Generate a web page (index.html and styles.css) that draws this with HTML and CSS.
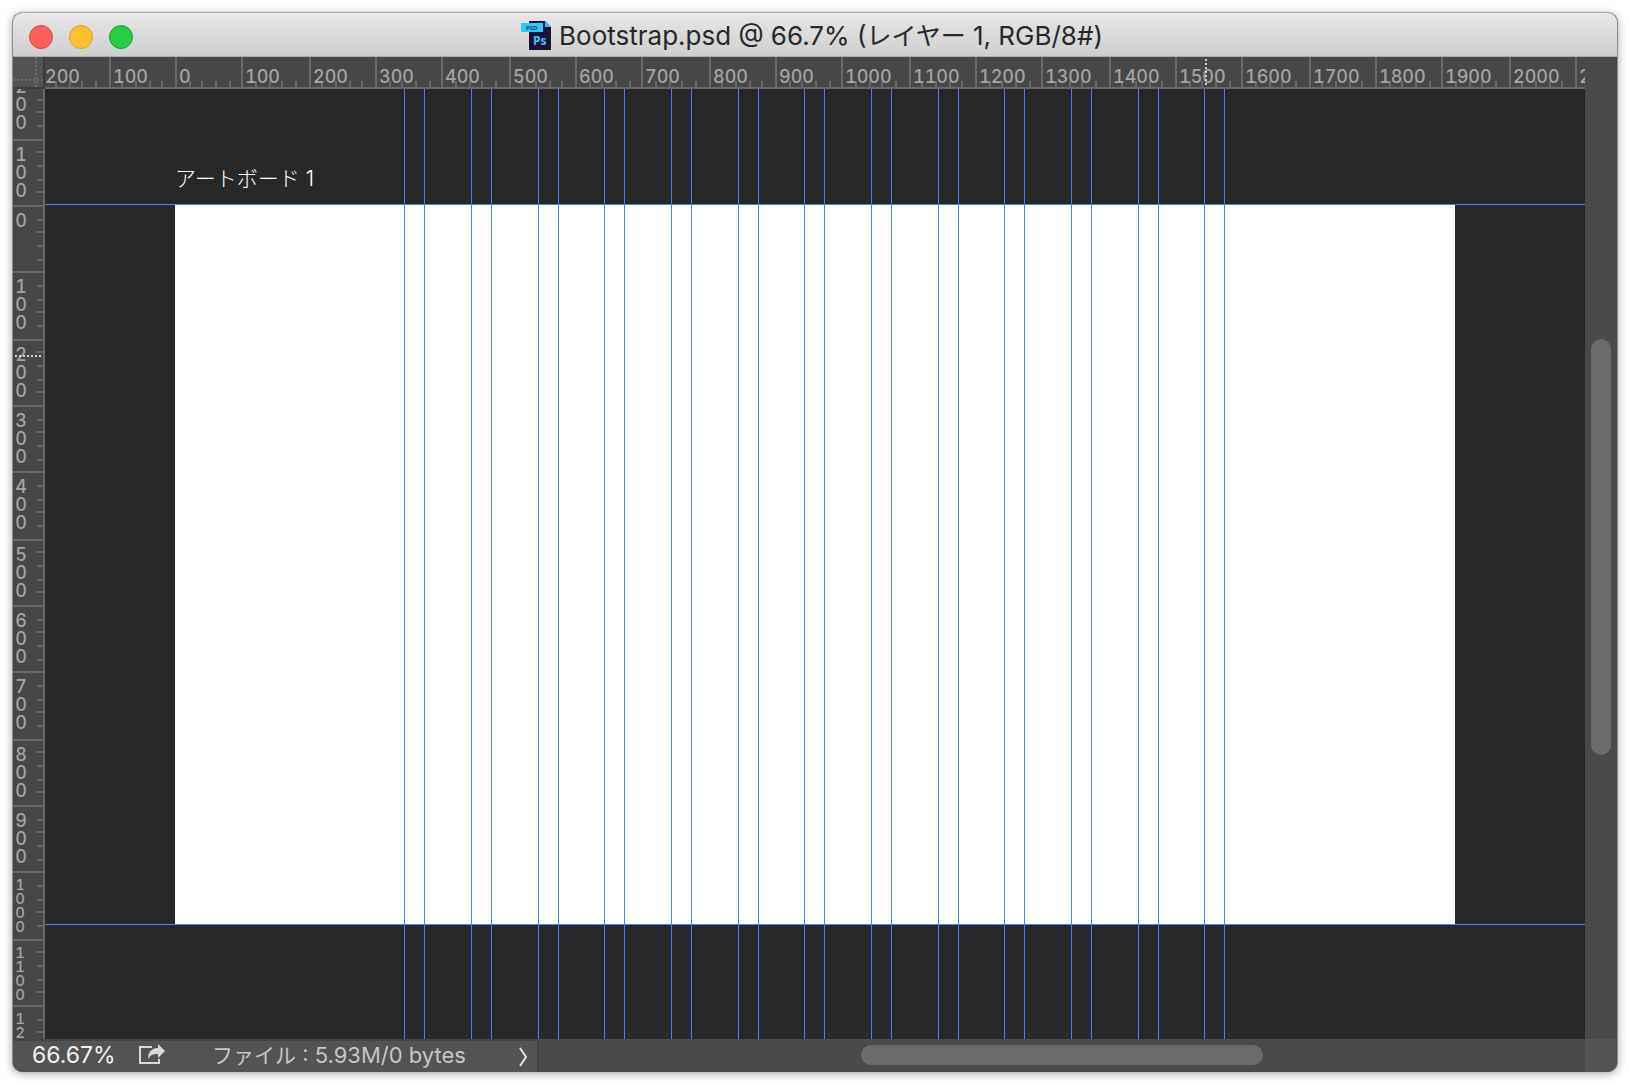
FILE: index.html
```html
<!DOCTYPE html>
<html lang="ja">
<head>
<meta charset="utf-8">
<title>Bootstrap.psd</title>
<link rel="stylesheet" href="styles.css">
</head>
<body>
<main class="window">
  <header class="titlebar">
    <div class="lights">
      <button class="light light-close" type="button" aria-label="閉じる"></button>
      <button class="light light-minimize" type="button" aria-label="しまう"></button>
      <button class="light light-zoom" type="button" aria-label="拡大"></button>
    </div>
    <div class="title">
      <svg class="file-icon" width="30" height="30" viewBox="0 0 30 30" aria-hidden="true">
        <path d="M8 0H24L30 6V29H8Z" fill="#1b1238"/>
        <path d="M24 0L30 6H24Z" fill="#2fc3fb"/>
        <rect x="0" y="2" width="22" height="9" fill="#2fc8ff"/>
        <text class="icon-tag" x="5" y="9">PSD</text>
        <text class="icon-ps" x="12" y="24">Ps</text>
      </svg>
      <h1 class="title-text">Bootstrap.psd @ 66.7% (<span class="title-kana">レイヤー</span> 1, RGB/8#)</h1>
    </div>
  </header>

  <div class="workspace">
    <div class="corner"></div>
    <div class="ruler ruler-h">
      <span class="seg">200</span><span class="seg">100</span><span class="seg">0</span><span class="seg">100</span><span class="seg">200</span><span class="seg">300</span><span class="seg">400</span><span class="seg">500</span><span class="seg">600</span><span class="seg">700</span><span class="seg">800</span><span class="seg">900</span><span class="seg">1000</span><span class="seg">1100</span><span class="seg">1200</span><span class="seg">1300</span><span class="seg">1400</span><span class="seg">1500</span><span class="seg">1600</span><span class="seg">1700</span><span class="seg">1800</span><span class="seg">1900</span><span class="seg">2000</span><span class="seg">2100</span>
      <i class="cursor-mark cursor-h"></i>
    </div>
    <div class="ruler ruler-v">
      <div class="seg"><span class="num">200</span></div>
      <div class="seg"><span class="num">100</span></div>
      <div class="seg"><span class="num">0</span></div>
      <div class="seg"><span class="num">100</span></div>
      <div class="seg"><span class="num">200</span></div>
      <div class="seg"><span class="num">300</span></div>
      <div class="seg"><span class="num">400</span></div>
      <div class="seg"><span class="num">500</span></div>
      <div class="seg"><span class="num">600</span></div>
      <div class="seg"><span class="num">700</span></div>
      <div class="seg"><span class="num">800</span></div>
      <div class="seg"><span class="num">900</span></div>
      <div class="seg"><span class="num num-small">1000</span></div>
      <div class="seg"><span class="num num-small">1100</span></div>
      <div class="seg"><span class="num num-small">1200</span></div>
      <i class="cursor-mark cursor-v"></i>
    </div>
    <div class="canvas">
      <div class="artboard-name">アートボード 1</div>
      <div class="artboard"></div>
      <i class="guide-h" style="top:115px"></i>
      <i class="guide-h" style="top:835px"></i>
      <i class="guide-v" style="left:359px"></i>
      <i class="guide-v" style="left:379px"></i>
      <i class="guide-v" style="left:426px"></i>
      <i class="guide-v" style="left:446px"></i>
      <i class="guide-v" style="left:493px"></i>
      <i class="guide-v" style="left:513px"></i>
      <i class="guide-v" style="left:559px"></i>
      <i class="guide-v" style="left:579px"></i>
      <i class="guide-v" style="left:626px"></i>
      <i class="guide-v" style="left:646px"></i>
      <i class="guide-v" style="left:693px"></i>
      <i class="guide-v" style="left:713px"></i>
      <i class="guide-v" style="left:759px"></i>
      <i class="guide-v" style="left:779px"></i>
      <i class="guide-v" style="left:826px"></i>
      <i class="guide-v" style="left:846px"></i>
      <i class="guide-v" style="left:893px"></i>
      <i class="guide-v" style="left:913px"></i>
      <i class="guide-v" style="left:959px"></i>
      <i class="guide-v" style="left:979px"></i>
      <i class="guide-v" style="left:1026px"></i>
      <i class="guide-v" style="left:1046px"></i>
      <i class="guide-v" style="left:1093px"></i>
      <i class="guide-v" style="left:1113px"></i>
      <i class="guide-v" style="left:1159px"></i>
      <i class="guide-v" style="left:1179px"></i>
    </div>
    <div class="scroll scroll-v"><div class="thumb"></div></div>
  </div>

  <footer class="bottom">
    <div class="status">
      <input class="zoom" type="text" value="66.67%" aria-label="ズーム">
      <button class="tool share" type="button" aria-label="共有">
        <svg width="26" height="21" viewBox="0 0 26 21" aria-hidden="true">
          <path d="M13 3H1V19H20V15" fill="none" stroke="#d8d8d8" stroke-width="2"/>
          <path d="M19 0L26 7L19 14V10C14 9.500 11 11 9.500 15C8.500 9 12 4.500 19 4Z" fill="#d8d8d8"/>
        </svg>
      </button>
      <span class="info"><span class="info-label">ファイル</span> : 5.93M/0 bytes</span>
      <button class="tool more" type="button" aria-label="情報を選択">
        <svg width="10" height="20" viewBox="0 0 10 20" aria-hidden="true">
          <path d="M2 1L8 10L2 19" fill="none" stroke="#e2e2e2" stroke-width="2"/>
        </svg>
      </button>
    </div>
    <div class="scroll scroll-h"><div class="thumb"></div></div>
    <div class="grip"></div>
  </footer>
</main>
</body>
</html>
```
FILE: styles.css
```css
* {
  box-sizing: border-box;
}

body {
  margin: 0;
  padding: 12px;
  height: 100vh;
  background: #fff;
  font-family: Inter, "Noto Sans CJK JP", sans-serif;
  overflow: hidden;
}

button {
  padding: 0;
  border: 0;
  background: none;
}

.window {
  display: flex;
  flex-direction: column;
  height: 100%;
  border: 1px solid #8e8e8e;
  border-top-color: #a6a6a6;
  border-bottom: 0;
  border-radius: 10px;
  overflow: hidden;
  background: #4a4a4a;
  box-shadow: 0 2px 9px rgba(0, 0, 0, 0.35);
}

/* Title bar */

.titlebar {
  display: grid;
  grid-template-columns: 1fr auto 1fr;
  align-items: center;
  flex: none;
  height: 44px;
  padding: 3px 16px 0;
  border-top: 1px solid #f2f2f2;
  border-bottom: 1px solid #a8aaa9;
  background: linear-gradient(#e6e6e6, #cecfce);
}

.lights {
  display: flex;
  gap: 16px;
}

.light {
  width: 24px;
  height: 24px;
  border: 1px solid #e2463f;
  border-radius: 50%;
  background: #fc605b;
}

.light-minimize {
  border-color: #e0a028;
  background: #fdc02f;
}

.light-zoom {
  border-color: #17a82c;
  background: #28cb41;
}

.title {
  display: flex;
  align-items: center;
  gap: 8px;
  padding: 0 6px 2px 0;
}

.file-icon {
  flex: none;
}

.icon-tag {
  font: 700 6px "Noto Sans", sans-serif;
  fill: #0f4a70;
}

.icon-ps {
  font: 700 12px "Noto Sans", sans-serif;
  fill: #35c8fb;
}

.title-text {
  margin: 0;
  color: #282828;
  font-size: 26px;
  font-weight: 400;
  line-height: 32px;
  white-space: nowrap;
}

.title-kana {
  font-size: 25px;
}

/* Rulers and canvas */

.workspace {
  display: grid;
  grid-template-columns: 32px minmax(0, 1fr) 32px;
  grid-template-rows: 32px minmax(0, 1fr);
  flex: 1;
  min-height: 0;
}

.corner {
  border-right: 2px solid #3c3c3c;
  border-bottom: 2px solid #3c3c3c;
  background:
    repeating-linear-gradient(#6c6c6c 0 2px, transparent 2px 4px) 22px 0 / 2px 100% no-repeat,
    repeating-linear-gradient(90deg, #6c6c6c 0 2px, transparent 2px 4px) 0 22px / 100% 2px no-repeat,
    #535353;
}

.ruler {
  position: relative;
  display: flex;
  overflow: hidden;
  background: #474747;
  color: #a3a3a3;
  font-size: 18px;
  font-weight: 500;
  font-variant-numeric: tabular-nums;
  --tick: linear-gradient(#696969, #696969);
}

.seg {
  flex: none;
  background-image: var(--tick), var(--tick), var(--tick), var(--tick);
  background-repeat: no-repeat;
  background-origin: border-box;
}

.ruler-h {
  border-bottom: 2px solid #696969;
}

.ruler-h .seg {
  width: 66px;
  padding: 9px 0 0 2px;
  border-left: 2px solid #696969;
  line-height: 22px;
  background-size: 2px 6px;
  background-position: right 50px bottom, right 38px bottom, right 24px bottom, right 10px bottom;
}

.ruler-h .seg:nth-child(3n + 1) {
  width: 68px;
  background-position: right 52px bottom, right 38px bottom, right 26px bottom, right 12px bottom;
}

.ruler-h .seg:nth-child(3n + 2) {
  background-position: right 52px bottom, right 38px bottom, right 24px bottom, right 12px bottom;
}

.ruler-h .seg:first-child {
  width: 64px;
  padding-left: 0;
  border-left: 0;
}

.ruler-v {
  flex-direction: column;
  border-right: 2px solid #696969;
}

.ruler-v .seg {
  display: flex;
  align-items: flex-start;
  height: 66px;
  padding: 5px 0 0 2px;
  border-top: 2px solid #696969;
  background-size: 6px 2px;
  background-position: right bottom 50px, right bottom 38px, right bottom 24px, right bottom 10px;
}

.ruler-v .seg:nth-child(3n + 1) {
  height: 68px;
  background-position: right bottom 52px, right bottom 38px, right bottom 26px, right bottom 12px;
}

.ruler-v .seg:nth-child(3n + 2) {
  background-position: right bottom 52px, right bottom 38px, right bottom 24px, right bottom 12px;
}

.ruler-v .seg:first-child {
  align-items: flex-end;
  height: 50px;
  padding: 0 0 7px 2px;
  border-top: 0;
}

.num {
  width: 12px;
  line-height: 18px;
  text-align: center;
  word-break: break-all;
}

.num-small {
  width: 10px;
  font-size: 15px;
  line-height: 14px;
}

.cursor-mark {
  position: absolute;
}

.cursor-h {
  left: 1160px;
  top: 2px;
  width: 2px;
  height: 26px;
  background: repeating-linear-gradient(#cfcfcf 0 2px, transparent 2px 4px);
}

.cursor-v {
  left: 2px;
  top: 266px;
  width: 26px;
  height: 2px;
  background: repeating-linear-gradient(90deg, #cfcfcf 0 2px, transparent 2px 4px);
}

.canvas {
  position: relative;
  overflow: hidden;
  background: #282828;
}

.artboard {
  position: absolute;
  left: 130px;
  top: 116px;
  width: 1280px;
  height: 720px;
  background: #fff;
}

.artboard-name {
  position: absolute;
  left: 130px;
  top: 78px;
  color: #fff;
  font-size: 21px;
  font-weight: 300;
  line-height: 24px;
}

.guide-h,
.guide-v {
  position: absolute;
  background: #4a80ff;
}

.guide-h {
  left: 0;
  right: 0;
  height: 1px;
}

.guide-v {
  top: 0;
  bottom: 0;
  width: 1px;
}

/* Scroll bars */

.scroll {
  display: flex;
  background: #4a4a4a;
}

.thumb {
  border-radius: 10px;
  background: #6a6a6a;
}

.scroll::before,
.scroll::after {
  content: "";
}

.scroll-v {
  grid-column: 3;
  grid-row: 1 / 3;
  flex-direction: column;
  padding: 0 6px;
}

.scroll-v::before {
  flex: 282;
}

.scroll-v .thumb {
  flex: 416;
}

.scroll-v::after {
  flex: 284;
}

.scroll-h {
  flex: 1;
  padding: 6px 0 7px;
}

.scroll-h::before,
.scroll-h::after {
  flex: 322;
}

.scroll-h .thumb {
  flex: 402;
}

/* Status bar */

.bottom {
  display: flex;
  flex: none;
  height: 33px;
}

.status {
  display: flex;
  align-items: center;
  width: 526px;
  padding: 0 9px 3px 19px;
  border-top: 2px solid #454545;
  border-right: 2px solid #424242;
  background: #535353;
}

.zoom {
  width: 107px;
  padding: 0;
  border: 0;
  background: none;
  color: #f0f0f0;
  font: 23px/28px Inter, sans-serif;
}

.tool {
  display: flex;
}

.share {
  width: 73px;
  padding-bottom: 2px;
}

.more {
  padding-top: 3px;
}

.info {
  flex: 1;
  color: #c6c6c6;
  font-size: 22px;
  line-height: 28px;
  white-space: nowrap;
}

.info-label {
  font-size: 21px;
}

.grip {
  width: 32px;
  background: #535353;
}
```
